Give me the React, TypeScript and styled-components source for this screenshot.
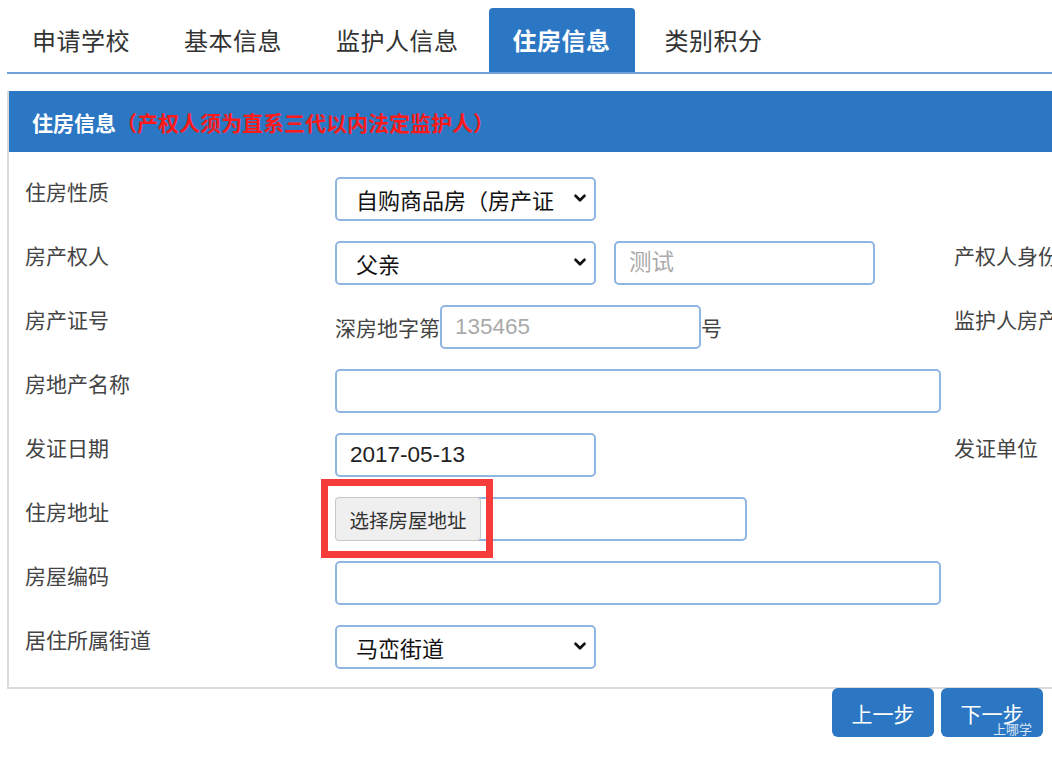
import React from 'react';
import styled, { createGlobalStyle } from 'styled-components';
import { ChevronDown } from 'lucide-react';

const GlobalStyle = createGlobalStyle`
  html, body {
    margin: 0;
    padding: 0;
    background: #fff;
    overflow: hidden;
  }
  body {
    font-family: "Liberation Sans", "Noto Sans CJK SC", sans-serif;
    color: #333;
  }
`;

const cjk = `"Noto Sans CJK SC", "Liberation Sans", sans-serif`;
const latin = `"Liberation Sans", "Noto Sans CJK SC", sans-serif`;

const Page = styled.div`
  width: 1052px;
  height: 760px;
  padding: 8px 0 0 7px;
  box-sizing: border-box;
  overflow: hidden;
`;

const TabBar = styled.div`
  display: flex;
  gap: 6px;
  width: 1100px;
  border-bottom: 2px solid #6ea2d9;
  padding-left: 1px;
`;

const Tab = styled.div<{ $active?: boolean }>`
  height: 64px;
  padding: 0 24px;
  display: flex;
  align-items: center;
  font-family: ${cjk};
  font-size: 24px;
  letter-spacing: 0.5px;
  border-radius: 4px 4px 0 0;
  color: ${(p) => (p.$active ? '#fff' : '#333')};
  background: ${(p) => (p.$active ? '#2b77c4' : 'transparent')};
  font-weight: ${(p) => (p.$active ? 700 : 400)};
  padding-bottom: 2px;
  box-sizing: border-box;
`;

const Panel = styled.div`
  margin-top: 17px;
  width: 1100px;
  border: 2px solid #dcdcdc;
  border-top: none;
  box-sizing: border-box;
`;

const PanelHeader = styled.div`
  height: 61px;
  background: #2b77c4;
  display: flex;
  align-items: center;
  padding-left: 23px;
  font-family: ${cjk};
  font-size: 21px;
  font-weight: 700;
  color: #fff;
`;

const Warn = styled.span`
  color: #ff1a1a;
`;

const Form = styled.div`
  padding: 25px 0 18px 16px;
  display: flex;
  flex-direction: column;
  gap: 20px;
`;

const Row = styled.div`
  display: grid;
  grid-template-columns: 310px 619px 1fr;
  align-items: start;
`;

const Label = styled.div`
  font-family: ${cjk};
  font-size: 21px;
  color: #444;
  line-height: 28px;
  padding-top: 0;
  white-space: nowrap;
`;

const Controls = styled.div`
  display: flex;
  align-items: center;
  gap: 18px;
`;

const Field = styled.input<{ $w: number }>`
  width: ${(p) => p.$w}px;
  height: 44px;
  box-sizing: border-box;
  border: 2px solid #8fb5e3;
  border-radius: 5px;
  padding: 0 13px;
  font-family: ${latin};
  font-size: 22.5px;
  color: #222;
  background: #fff;
  outline: none;
  &::placeholder {
    color: #aaa;
  }
`;

const SelectWrap = styled.div`
  position: relative;
  width: 261px;
  height: 44px;
`;

const Select = styled.select`
  appearance: none;
  width: 100%;
  height: 100%;
  box-sizing: border-box;
  border: 2px solid #8fb5e3;
  border-radius: 5px;
  padding: 0 40px 0 19px;
  font-family: ${cjk};
  font-size: 22px;
  color: #111;
  background: #fff;
  outline: none;
`;

const Arrow = styled.span`
  position: absolute;
  right: 7px;
  top: 12px;
  display: flex;
  pointer-events: none;
  color: #111;
`;

const Prefix = styled.span`
  font-family: ${cjk};
  font-size: 21px;
  color: #444;
  white-space: nowrap;
`;

const Inline = styled.div`
  display: flex;
  align-items: center;
`;

const AddressWrap = styled.div`
  position: relative;
  width: 412px;
  height: 44px;
`;

const PickButton = styled.button`
  position: absolute;
  left: 0;
  top: 0;
  width: 146px;
  height: 44px;
  border: 1px solid #c8c8c8;
  border-radius: 4px;
  background: #efefef;
  font-family: ${cjk};
  font-size: 19.5px;
  color: #333;
  padding: 0;
`;

const Highlight = styled.div`
  position: absolute;
  left: -14px;
  top: -18px;
  width: 172px;
  height: 79px;
  box-sizing: border-box;
  border: 7px solid #f63b3b;
  pointer-events: none;
`;

const Footer = styled.div`
  display: flex;
  justify-content: flex-end;
  gap: 7px;
  width: 1036px;
  margin-top: -1px;
`;

const StepButton = styled.button`
  position: relative;
  width: 102px;
  height: 49px;
  border: none;
  border-radius: 6px;
  background: #2b77c4;
  color: #fff;
  font-family: ${cjk};
  font-size: 21px;
  padding: 0;
`;

const Watermark = styled.span`
  position: absolute;
  right: 11px;
  bottom: -1px;
  font-size: 13px;
  color: rgba(255, 255, 255, 0.85);
`;

const SelectBox: React.FC<{ value: string }> = ({ value }) => (
  <SelectWrap>
    <Select defaultValue={value}>
      <option value={value}>{value}</option>
    </Select>
    <Arrow>
      <ChevronDown size={18} strokeWidth={3.5} />
    </Arrow>
  </SelectWrap>
);

const tabs = ['申请学校', '基本信息', '监护人信息', '住房信息', '类别积分'];

export default function App() {
  return (
    <Page>
      <GlobalStyle />
      <TabBar>
        {tabs.map((t) => (
          <Tab key={t} $active={t === '住房信息'}>
            {t}
          </Tab>
        ))}
      </TabBar>
      <Panel>
        <PanelHeader>
          住房信息<Warn>（产权人须为直系三代以内法定监护人）</Warn>
        </PanelHeader>
        <Form>
          <Row>
            <Label>住房性质</Label>
            <Controls>
              <SelectBox value="自购商品房（房产证）" />
            </Controls>
          </Row>
          <Row>
            <Label>房产权人</Label>
            <Controls>
              <SelectBox value="父亲" />
              <Field $w={261} placeholder="测试" />
            </Controls>
            <Label>产权人身份证号</Label>
          </Row>
          <Row>
            <Label>房产证号</Label>
            <Inline>
              <Prefix>深房地字第</Prefix>
              <Field $w={261} placeholder="135465" />
              <Prefix>号</Prefix>
            </Inline>
            <Label>监护人房产</Label>
          </Row>
          <Row>
            <Label>房地产名称</Label>
            <Controls>
              <Field $w={606} />
            </Controls>
          </Row>
          <Row>
            <Label>发证日期</Label>
            <Controls>
              <Field $w={261} defaultValue="2017-05-13" />
            </Controls>
            <Label>发证单位</Label>
          </Row>
          <Row>
            <Label>住房地址</Label>
            <Controls>
              <AddressWrap>
                <Field $w={412} />
                <PickButton>选择房屋地址</PickButton>
                <Highlight />
              </AddressWrap>
            </Controls>
          </Row>
          <Row>
            <Label>房屋编码</Label>
            <Controls>
              <Field $w={606} />
            </Controls>
          </Row>
          <Row>
            <Label>居住所属街道</Label>
            <Controls>
              <SelectBox value="马峦街道" />
            </Controls>
          </Row>
        </Form>
      </Panel>
      <Footer>
        <StepButton>上一步</StepButton>
        <StepButton>
          下一步
          <Watermark>上哪学</Watermark>
        </StepButton>
      </Footer>
    </Page>
  );
}
